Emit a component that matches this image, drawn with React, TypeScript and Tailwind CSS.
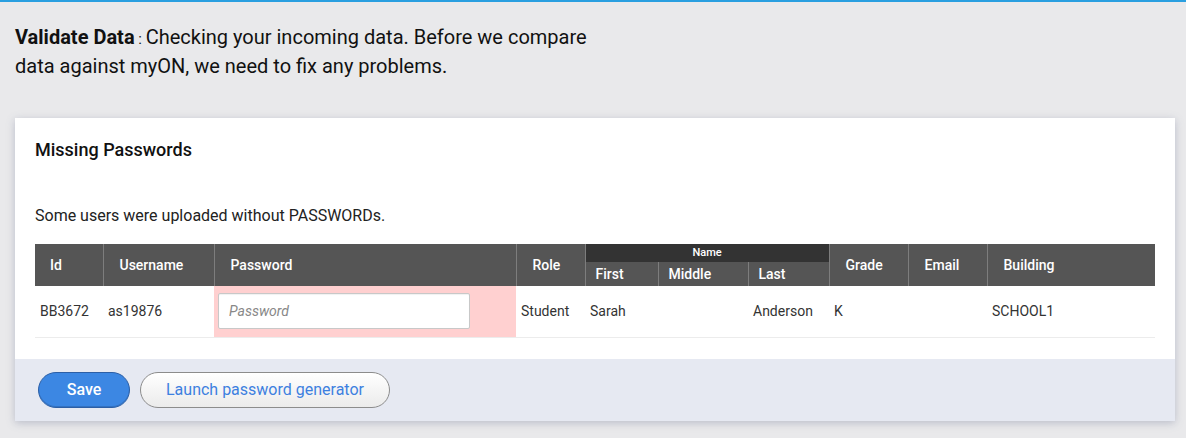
import React from "react";

export default function App() {
  const th = "bg-[#555555] text-white font-medium text-[14px] text-left border-r border-[#7d7d7d] align-middle";
  const td = "text-[14px] text-[#333] pl-[5px] align-middle";
  return (
    <div className="w-[1186px] h-[438px] bg-[#e9e9eb] border-t-2 border-[#2a9fe0] font-['Roboto',sans-serif] overflow-hidden">
      <div className="pl-[15px] pt-[22px] w-[600px] text-[20px] leading-[27px] text-[#111]">
        <span className="font-bold">Validate Data</span>
        <span className="text-[15px]"> : </span>
        Checking your incoming data. Before we compare data against myON, we need to fix any problems.
      </div>
      <div className="ml-[15px] mt-[38px] w-[1160px] bg-white shadow-[0_2px_8px_rgba(100,110,140,0.35)]">
        <div className="px-[20px] pt-[21px] pb-[21px]">
          <div className="text-[18px] leading-[22px] font-medium text-[#111]">Missing Passwords</div>
          <div className="mt-[45px] text-[16px] leading-[20px] text-[#222]">Some users were uploaded without PASSWORDs.</div>
          <table className="mt-[18px] w-[1120px] table-fixed border-collapse">
            <colgroup>
              <col className="w-[68px]" />
              <col className="w-[111px]" />
              <col className="w-[302px]" />
              <col className="w-[69px]" />
              <col className="w-[73px]" />
              <col className="w-[90px]" />
              <col className="w-[81px]" />
              <col className="w-[79px]" />
              <col className="w-[79px]" />
              <col className="w-[168px]" />
            </colgroup>
            <thead>
              <tr className="h-[18px]">
                <th rowSpan={2} className={`${th} pl-[15px]`}>Id</th>
                <th rowSpan={2} className={`${th} pl-[16px]`}>Username</th>
                <th rowSpan={2} className={`${th} pl-[16px]`}>Password</th>
                <th rowSpan={2} className={`${th} pl-[16px]`}>Role</th>
                <th colSpan={3} className="bg-[#333333] text-white font-medium text-[11px] leading-[18px] text-center border-r border-[#7d7d7d]">Name</th>
                <th rowSpan={2} className={`${th} pl-[16px]`}>Grade</th>
                <th rowSpan={2} className={`${th} pl-[16px]`}>Email</th>
                <th rowSpan={2} className={`${th} pl-[16px] border-r-0`}>Building</th>
              </tr>
              <tr className="h-[24px]">
                <th className={`${th} pl-[10px]`}>First</th>
                <th className={`${th} pl-[10px]`}>Middle</th>
                <th className={`${th} pl-[10px]`}>Last</th>
              </tr>
            </thead>
            <tbody>
              <tr className="h-[51px] border-b border-[#ececec]">
                <td className={td}>BB3672</td>
                <td className={td}>as19876</td>
                <td className="bg-[#ffd0d0] pl-[4px] align-middle">
                  <input
                    placeholder="Password"
                    className="w-[252px] h-[36px] bg-white border border-[#c8c8c8] rounded-[2px] px-[10px] text-[14px] italic text-[#333] placeholder:text-[#888] outline-none shadow-[inset_0_1px_1px_rgba(0,0,0,0.06)]"
                  />
                </td>
                <td className={td}>Student</td>
                <td className={td}>Sarah</td>
                <td className={td}></td>
                <td className={td}>Anderson</td>
                <td className={td}>K</td>
                <td className={td}></td>
                <td className={td}>SCHOOL1</td>
              </tr>
            </tbody>
          </table>
        </div>
        <div className="bg-[#e6e9f2] h-[62px] flex items-center pl-[23px] gap-[10px]">
          <button className="w-[92px] h-[36px] rounded-full bg-[#3c87e3] border border-[#2c5fa6] text-white text-[16px] font-medium shadow-[inset_0_-1px_0_rgba(0,0,0,0.15)]">
            Save
          </button>
          <button className="w-[250px] h-[36px] rounded-full bg-gradient-to-b from-white to-[#ebebeb] border border-[#8c8c8c] text-[#3d80e0] text-[16px]">
            Launch password generator
          </button>
        </div>
      </div>
    </div>
  );
}
